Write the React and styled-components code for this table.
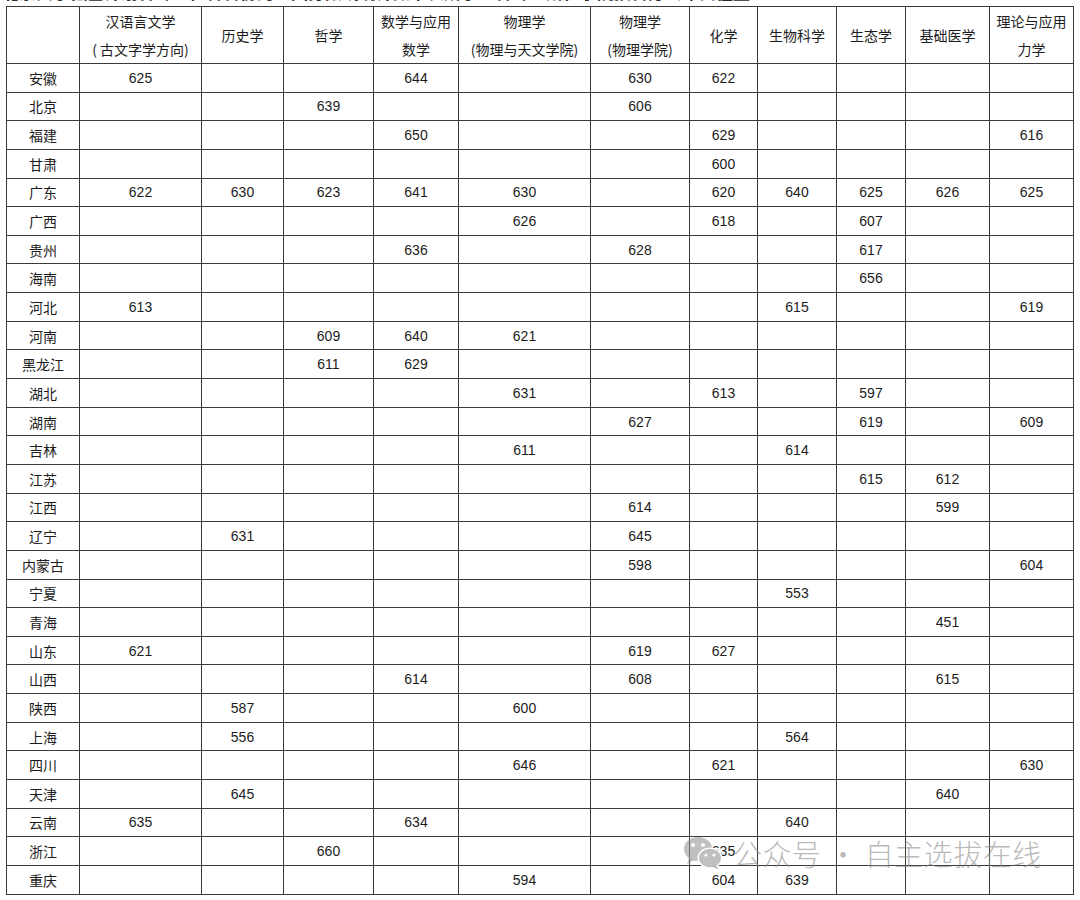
import React from 'react';
import styled, { createGlobalStyle } from 'styled-components';

const GlobalStyle = createGlobalStyle`
  html, body {
    margin: 0;
    padding: 0;
    background: #ffffff;
  }
  body {
    font-family: "Liberation Sans", "Noto Sans CJK SC", sans-serif;
    color: #1c1c1c;
  }
`;

const Page = styled.div`
  width: 1080px;
  height: 900px;
  overflow: hidden;
  background: #ffffff;
`;

const TopClip = styled.div`
  height: 5px;
  overflow: hidden;
  padding-left: 2px;
`;

const TopLine = styled.div`
  margin-top: -18px;
  font-size: 17px;
  line-height: 20px;
  font-weight: 700;
  white-space: nowrap;
  color: #2a2a2a;
  font-family: "Noto Sans CJK SC", sans-serif;
`;

const TableWrap = styled.div`
  position: relative;
  padding: 1px 0 0 6px;
  width: 1068px;
`;

const Grid = styled.table`
  width: 1067px;
  table-layout: fixed;
  border-collapse: collapse;
  border: 1.5px solid #8c8c8c;
  font-size: 14px;
`;

const HeadCell = styled.th`
  font-weight: 400;
  text-align: center;
  vertical-align: middle;
  height: 55px;
  padding: 0;
  line-height: 28px;
  border: 1px solid #3a3a3a;
  font-family: "Noto Sans CJK SC", sans-serif;
`;

const Cell = styled.td`
  text-align: center;
  vertical-align: middle;
  height: 27.65px;
  padding: 0;
  line-height: 18px;
  border: 1px solid #3a3a3a;
  font-family: ${p => (p.$name ? '"Noto Sans CJK SC", sans-serif' : '"Liberation Sans", "Noto Sans CJK SC", sans-serif')};
`;

const Watermark = styled.div`
  position: absolute;
  left: 683px;
  top: 827px;
  display: flex;
  align-items: center;
  gap: 8px;
  pointer-events: none;
`;

const MarkText = styled.span`
  font-family: "Noto Sans CJK SC", sans-serif;
  font-weight: 300;
  font-size: 29px;
  letter-spacing: 0.5px;
  color: rgba(140, 140, 140, 0.62);
  white-space: nowrap;
`;

const WeChatIcon = () => (
  <svg width="42" height="36" viewBox="0 0 42 36">
    <ellipse cx="15" cy="14" rx="14" ry="12" fill="rgba(150,150,150,0.6)" />
    <path d="M6 23 L4 29 L11 25 Z" fill="rgba(150,150,150,0.6)" />
    <circle cx="10" cy="10" r="2" fill="#fff" />
    <circle cx="20" cy="10" r="2" fill="#fff" />
    <ellipse cx="27" cy="23" rx="12.5" ry="10.5" fill="#fff" />
    <ellipse cx="27" cy="23" rx="11" ry="9.2" fill="rgba(150,150,150,0.6)" />
    <path d="M33 30 L36 35 L29 31.5 Z" fill="rgba(150,150,150,0.6)" />
    <circle cx="23" cy="20" r="1.6" fill="#fff" />
    <circle cx="31" cy="20" r="1.6" fill="#fff" />
  </svg>
);

const widths = [73, 122, 82, 90, 85, 132, 99, 68, 79, 69, 84, 84];

const headers = [
  [''],
  ['汉语言文学', '( 古文字学方向)'],
  ['历史学'],
  ['哲学'],
  ['数学与应用', '数学'],
  ['物理学', '(物理与天文学院)'],
  ['物理学', '(物理学院)'],
  ['化学'],
  ['生物科学'],
  ['生态学'],
  ['基础医学'],
  ['理论与应用', '力学'],
];

// 列顺序: 汉语言 历史 哲学 数学 物天 物理学院 化学 生物 生态 基础医学 力学
const rows = [
  ['安徽', '625', '', '', '644', '', '630', '622', '', '', '', ''],
  ['北京', '', '', '639', '', '', '606', '', '', '', '', ''],
  ['福建', '', '', '', '650', '', '', '629', '', '', '', '616'],
  ['甘肃', '', '', '', '', '', '', '600', '', '', '', ''],
  ['广东', '622', '630', '623', '641', '630', '', '620', '640', '625', '626', '625'],
  ['广西', '', '', '', '', '626', '', '618', '', '607', '', ''],
  ['贵州', '', '', '', '636', '', '628', '', '', '617', '', ''],
  ['海南', '', '', '', '', '', '', '', '', '656', '', ''],
  ['河北', '613', '', '', '', '', '', '', '615', '', '', '619'],
  ['河南', '', '', '609', '640', '621', '', '', '', '', '', ''],
  ['黑龙江', '', '', '611', '629', '', '', '', '', '', '', ''],
  ['湖北', '', '', '', '', '631', '', '613', '', '597', '', ''],
  ['湖南', '', '', '', '', '', '627', '', '', '619', '', '609'],
  ['吉林', '', '', '', '', '611', '', '', '614', '', '', ''],
  ['江苏', '', '', '', '', '', '', '', '', '615', '612', ''],
  ['江西', '', '', '', '', '', '614', '', '', '', '599', ''],
  ['辽宁', '', '631', '', '', '', '645', '', '', '', '', ''],
  ['内蒙古', '', '', '', '', '', '598', '', '', '', '', '604'],
  ['宁夏', '', '', '', '', '', '', '', '553', '', '', ''],
  ['青海', '', '', '', '', '', '', '', '', '', '451', ''],
  ['山东', '621', '', '', '', '', '619', '627', '', '', '', ''],
  ['山西', '', '', '', '614', '', '608', '', '', '', '615', ''],
  ['陕西', '', '587', '', '', '600', '', '', '', '', '', ''],
  ['上海', '', '556', '', '', '', '', '', '564', '', '', ''],
  ['四川', '', '', '', '', '646', '', '621', '', '', '', '630'],
  ['天津', '', '645', '', '', '', '', '', '', '', '640', ''],
  ['云南', '635', '', '', '634', '', '', '', '640', '', '', ''],
  ['浙江', '', '', '660', '', '', '', '635', '', '', '', ''],
  ['重庆', '', '', '', '', '594', '', '604', '639', '', '', ''],
];

const App = () => {
  return (
    <Page>
      <GlobalStyle />
      <TopClip>
        <TopLine>北京大学强基计划各专业在各省份的入围分数线统计如下表所示（各专业所在学院按官方公布口径整理）</TopLine>
      </TopClip>
      <TableWrap>
        <Grid>
          <colgroup>
            {widths.map((w, i) => (
              <col key={i} style={{ width: w }} />
            ))}
          </colgroup>
          <thead>
            <tr>
              {headers.map((h, i) => (
                <HeadCell key={i}>
                  {h.map((line, j) => (
                    <div key={j}>{line}</div>
                  ))}
                </HeadCell>
              ))}
            </tr>
          </thead>
          <tbody>
            {rows.map(r => (
              <tr key={r[0]}>
                {r.map((v, i) => (
                  <Cell key={i} $name={i === 0}>
                    {v}
                  </Cell>
                ))}
              </tr>
            ))}
          </tbody>
        </Grid>
        <Watermark>
          <WeChatIcon />
          <MarkText>公众号 · 自主选拔在线</MarkText>
        </Watermark>
      </TableWrap>
    </Page>
  );
};

export default App;
